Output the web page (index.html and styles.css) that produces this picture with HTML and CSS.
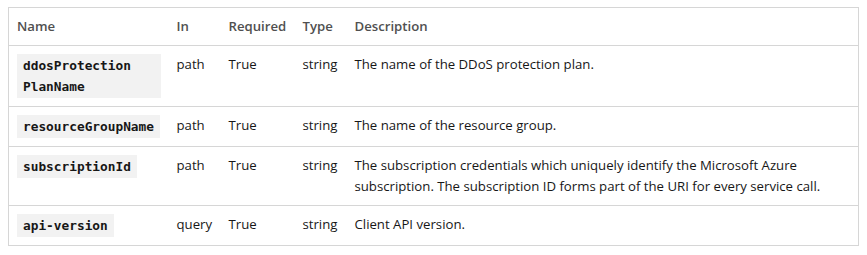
FILE: index.html
```html
<!DOCTYPE html>
<html lang="en">
<head>
<meta charset="utf-8">
<title>URI Parameters</title>
<link rel="stylesheet" href="styles.css">
</head>
<body>
<table class="params">
  <colgroup>
    <col class="c-name">
    <col class="c-in">
    <col class="c-req">
    <col class="c-type">
    <col class="c-desc">
  </colgroup>
  <thead>
    <tr>
      <th>Name</th>
      <th>In</th>
      <th>Required</th>
      <th>Type</th>
      <th>Description</th>
    </tr>
  </thead>
  <tbody>
    <tr>
      <td><code>ddosProtection<wbr>PlanName</code></td>
      <td>path</td>
      <td>True</td>
      <td>string</td>
      <td>The name of the DDoS protection plan.</td>
    </tr>
    <tr>
      <td><code>resourceGroupName</code></td>
      <td>path</td>
      <td>True</td>
      <td>string</td>
      <td>The name of the resource group.</td>
    </tr>
    <tr>
      <td><code>subscriptionId</code></td>
      <td>path</td>
      <td>True</td>
      <td>string</td>
      <td>The subscription credentials which uniquely identify the Microsoft Azure subscription. The subscription ID forms part of the URI for every service call.</td>
    </tr>
    <tr>
      <td><code>api-version</code></td>
      <td>query</td>
      <td>True</td>
      <td>string</td>
      <td>Client API version.</td>
    </tr>
  </tbody>
</table>
</body>
</html>
```

FILE: styles.css
```css
body {
  margin: 7px 8px 8px;
  background: #ffffff;
  font-family: "Open Sans", "Noto Sans", sans-serif;
  font-size: 13.2px;
  color: #171717;
}

.params {
  width: 851px;
  table-layout: fixed;
  border-collapse: collapse;
  border: 1px solid #d6d6d6;
}

.c-name { width: 160px; }
.c-in { width: 52px; }
.c-req { width: 74px; }
.c-type { width: 52px; }

.params th,
.params td {
  padding: 8px;
  text-align: left;
  vertical-align: top;
  line-height: 21px;
  border-top: 1px solid #d6d6d6;
}

.params th {
  font-weight: 600;
  color: #505050;
}

.params code {
  display: inline-block;
  padding: 1px 6px;
  background: #f2f2f2;
  font-family: "DejaVu Sans Mono", monospace;
  font-size: 12.8px;
  font-weight: bold;
  line-height: 21px;
  color: #171717;
}
```
